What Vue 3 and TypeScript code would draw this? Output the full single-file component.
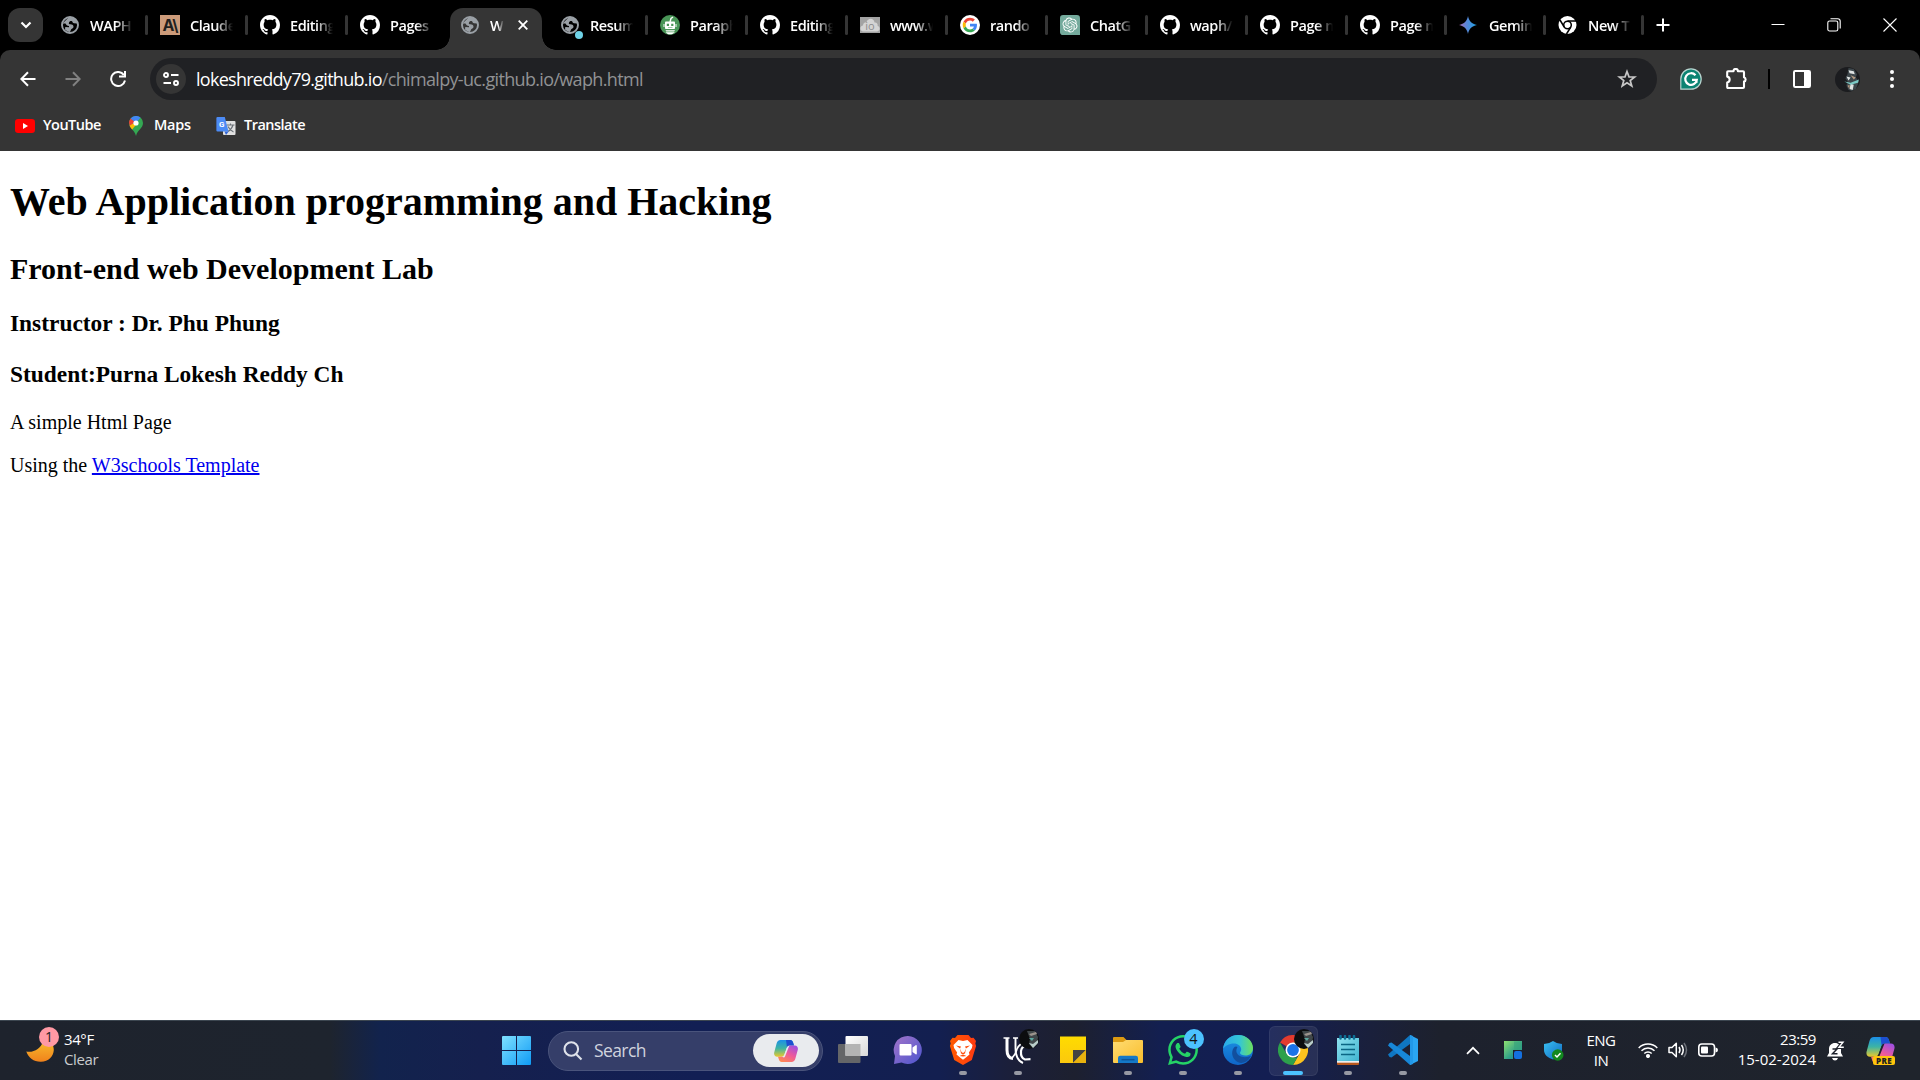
<script setup lang="ts">
interface Tab {
  icon: string
  title: string
  width: number
  active?: boolean
  noSep?: boolean
}

const tabs: Tab[] = [
  { icon: 'globe', title: 'WAPH', width: 100 },
  { icon: 'claude', title: 'Claude', width: 100 },
  { icon: 'github', title: 'Editing', width: 100 },
  { icon: 'github', title: 'Pages', width: 100, noSep: true },
  { icon: 'globe', title: 'W', width: 100, active: true, noSep: true },
  { icon: 'globe-dot', title: 'Resum', width: 100 },
  { icon: 'bot', title: 'Paraph', width: 100 },
  { icon: 'github', title: 'Editing', width: 100 },
  { icon: 'io', title: 'www.w', width: 100 },
  { icon: 'google', title: 'rando', width: 100 },
  { icon: 'openai', title: 'ChatG', width: 100 },
  { icon: 'github', title: 'waph/', width: 100 },
  { icon: 'github', title: 'Page n', width: 100 },
  { icon: 'github', title: 'Page n', width: 99 },
  { icon: 'gemini', title: 'Gemin', width: 99 },
  { icon: 'chrome', title: 'New T', width: 98 },
]

const apps: { name: string; running: boolean; active?: boolean }[] = [
  { name: 'taskview', running: false },
  { name: 'chat', running: false },
  { name: 'brave', running: true },
  { name: 'uc', running: true },
  { name: 'sticky', running: false },
  { name: 'folder', running: true },
  { name: 'whatsapp', running: true },
  { name: 'edge', running: true },
  { name: 'chrome', running: true, active: true },
  { name: 'notepad', running: true },
  { name: 'vscode', running: true },
]
</script>

<template>
  <div class="screen">
    <svg class="defs" width="0" height="0">
      <defs>
        <linearGradient id="gem" x1="0" x2="1"><stop offset="0" stop-color="#a96bb0" /><stop offset=".4" stop-color="#5b86d8" /><stop offset="1" stop-color="#1ba1e3" /></linearGradient>
        <linearGradient id="win" x1="0" y1="0" x2="1" y2="1"><stop offset="0" stop-color="#7fe0ff" /><stop offset="1" stop-color="#0f9bf5" /></linearGradient>
        <linearGradient id="moon" x1="0" y1="0" x2="0" y2="1"><stop offset="0" stop-color="#f9c22e" /><stop offset="1" stop-color="#f0821c" /></linearGradient>
        <linearGradient id="cpA" x1="0" y1="0" x2="0" y2="1"><stop offset="0" stop-color="#1b8fe8" /><stop offset=".5" stop-color="#3db4a4" /><stop offset="1" stop-color="#e9c92c" /></linearGradient>
        <linearGradient id="cpB" x1=".8" y1="0" x2=".2" y2="1"><stop offset="0" stop-color="#a04fe0" /><stop offset=".5" stop-color="#ee5a9a" /><stop offset="1" stop-color="#ff8a50" /></linearGradient>
        <linearGradient id="chat" x1="0" y1="0" x2="1" y2="1"><stop offset="0" stop-color="#a274c8" /><stop offset="1" stop-color="#4d55cf" /></linearGradient>
        <linearGradient id="tvA" x1="0" y1="0" x2="1" y2="1"><stop offset="0" stop-color="#fff" /><stop offset="1" stop-color="#d8d8d8" /></linearGradient>
        <linearGradient id="brave" x1="0" x2="1"><stop offset="0" stop-color="#ff5a00" /><stop offset="1" stop-color="#ff3a12" /></linearGradient>
        <linearGradient id="sticky" x1="0" y1="0" x2="0" y2="1"><stop offset="0" stop-color="#ffdc00" /><stop offset="1" stop-color="#fbc80e" /></linearGradient>
        <linearGradient id="folder" x1="0" y1="0" x2="1" y2="1"><stop offset="0" stop-color="#ffdc72" /><stop offset="1" stop-color="#f9bd2c" /></linearGradient>
        <linearGradient id="edgeA" x1="0" y1="0" x2="1" y2="0"><stop offset="0" stop-color="#2aa9e8" /><stop offset=".55" stop-color="#34c6d6" /><stop offset="1" stop-color="#6de05c" /></linearGradient>
        <linearGradient id="edgeB" x1="0" y1="0" x2="0" y2="1"><stop offset="0" stop-color="#1c94e4" /><stop offset="1" stop-color="#0f66c9" /></linearGradient>
        <linearGradient id="note" x1="0" y1="0" x2="1" y2="1"><stop offset="0" stop-color="#8ee2ef" /><stop offset="1" stop-color="#3fb4d0" /></linearGradient>
        <linearGradient id="tray" x1="0" y1="0" x2="1" y2="1"><stop offset="0" stop-color="#8fe070" /><stop offset=".6" stop-color="#2fa088" /><stop offset="1" stop-color="#1f7fae" /></linearGradient>
        <linearGradient id="shield" x1="0" y1="0" x2="1" y2="1"><stop offset="0" stop-color="#39c0f2" /><stop offset="1" stop-color="#1069c0" /></linearGradient>
        <symbol id="avatar" viewBox="0 0 24 24">
          <circle cx="12" cy="12" r="12" fill="#1b1c1f" />
          <path d="M13 1l5 1 3 5-1 3 3 4-3 7-4 2-3-1-2-4 1-4-2-3 2-4z" fill="#3d464b" />
          <path d="M13 3l5 1 1 3-5-1zM11 9l4 1-2 3zM15 16l3 1-1 5-3-1z" fill="#dfe3e2" />
          <path d="M9 14l6 1 8-3-1 3-7 2z" fill="#7bcac5" />
          <path d="M15 8l5 2-2 2zM12 18l2-1 0 4z" fill="#b59a81" />
        </symbol>
        <symbol id="face" viewBox="0 0 20 20">
          <circle cx="10" cy="10" r="10" fill="#0c0d0f" />
          <path d="M8 2l8 0 3 6-1 7-4 4-4-4 1-5z" fill="#40474a" />
          <path d="M10 5l7-2 1 2-6 2z" fill="#9c948d" />
          <path d="M10 14l4 1 5-4 0 3-5 5z" fill="#b9cdca" />
          <path d="M10 9l5 0-2 3z" fill="#5ba7a0" />
        </symbol>
        <symbol id="copilot" viewBox="0 0 24 22">
          <path d="M6.500 0h9.800c1.500 0 2.300 1 2.800 2.400l.9 3.100h-4c-1.800 0-2.700 1-3.200 2.600l-2.300 6.500C9.900 16 9 16.700 7.600 16.700H3.200C.8 16.700-.3 14.800.2 12.400L2.600 3.500C3.200 1.300 4.400 0 6.500 0z" fill="url(#cpA)" />
          <path d="M12 0h4.300c1.500 0 2.300 1 2.800 2.400l.9 3.100h-4c-1.800 0-2.500.8-3 2.100z" fill="#1d4fd0" />
          <path d="M17.500 22H7.700c-1.500 0-2.300-1-2.800-2.400L4 16.700h4c1.800 0 2.700-1 3.200-2.800l2.300-6.300c.5-1.400 1.400-2.100 2.800-2.100h4.500c2.400 0 3.500 1.900 3 4.300l-2.400 8.700C20.800 20.700 19.600 22 17.500 22z" fill="url(#cpB)" />
          <path d="M12.800 7.800q.7-2 2.600-2.300L11 16.500q-.8 1.700-2.700.2 1.500-.5 2-2z" fill="#e9ebee" />
        </symbol>
        <symbol id="copilot-dark" viewBox="0 0 24 22">
          <path d="M6.500 0h9.800c1.500 0 2.300 1 2.800 2.400l.9 3.100h-4c-1.800 0-2.700 1-3.200 2.600l-2.300 6.500C9.900 16 9 16.700 7.600 16.700H3.200C.8 16.700-.3 14.800.2 12.400L2.600 3.500C3.200 1.300 4.400 0 6.500 0z" fill="url(#cpA)" />
          <path d="M12 0h4.300c1.500 0 2.300 1 2.800 2.400l.9 3.100h-4c-1.800 0-2.500.8-3 2.100z" fill="#1d4fd0" />
          <path d="M17.500 22H7.700c-1.500 0-2.300-1-2.800-2.400L4 16.700h4c1.800 0 2.700-1 3.200-2.800l2.300-6.300c.5-1.400 1.400-2.100 2.800-2.100h4.500c2.400 0 3.500 1.900 3 4.300l-2.400 8.700C20.800 20.700 19.600 22 17.500 22z" fill="url(#cpB)" />
          <path d="M12.800 7.800q.7-2 2.600-2.300L11 16.500q-.8 1.700-2.700.2 1.500-.5 2-2z" fill="#1f232d" />
        </symbol>
      </defs>
    </svg>

    <header class="tabstrip">
      <button class="tab-search">
        <svg width="12" height="12" viewBox="0 0 12 12"><path d="M1.500 3.500L6 8l4.500-4.500" fill="none" stroke="#fff" stroke-width="2.200" /></svg>
      </button>
      <div class="tabs">
        <div v-for="(tab, i) in tabs" :key="i" class="tab" :class="{ active: tab.active, nosep: tab.noSep }" :style="{ width: tab.width + 'px' }">
          <span class="favicon">
            <svg v-if="tab.icon.startsWith('globe')" width="20" height="20" viewBox="0 0 20 20">
              <circle cx="10" cy="10" r="8" fill="none" stroke="#9aa0a6" stroke-width="1.900" />
              <path d="M2.500 8.500L9 2l5 1c2 1 3.500 3.500 3.500 5.500l-3.500-.3c-2-.2-1-2-2.500-2.200-1.700 0-2 .5-2.500 1.500-.4 1-.1 1.500.7 1.700 2 .2 3.800.2 3.800 2.600 0 1.200-.7 1.700-2 2.200-.8.6-.6 1.700-1.500 2.900l-2.500-.4-2.500-2 .3-2.500 3.700.2V11c-2 0-2.700-1.300-3.500-2.500z" fill="#9aa0a6" />
            </svg>
            <span v-else-if="tab.icon === 'claude'" class="claude">A\</span>
            <svg v-else-if="tab.icon === 'github'" width="20" height="20" viewBox="0 0 16 16"><path fill="#fff" d="M8 0C3.580 0 0 3.580 0 8c0 3.540 2.290 6.530 5.470 7.590.4.070.55-.17.55-.38 0-.19-.01-.82-.01-1.490-2.010.37-2.530-.49-2.690-.94-.09-.23-.48-.94-.82-1.130-.28-.15-.68-.52-.01-.53.63-.01 1.080.58 1.230.82.72 1.210 1.870.87 2.330.66.07-.52.28-.87.51-1.070-1.780-.2-3.640-.89-3.640-3.950 0-.87.31-1.590.82-2.150-.08-.2-.36-1.020.08-2.120 0 0 .67-.21 2.200.82.64-.18 1.320-.27 2-.27.68 0 1.360.09 2 .27 1.530-1.040 2.200-.82 2.200-.82.44 1.100.16 1.920.08 2.120.51.56.82 1.270.82 2.150 0 3.070-1.870 3.750-3.650 3.950.29.25.54.73.54 1.480 0 1.070-.01 1.930-.01 2.200 0 .21.15.46.55.38A8.013 8.013 0 0016 8c0-4.420-3.580-8-8-8z" /></svg>
            <svg v-else-if="tab.icon === 'bot'" width="20" height="20" viewBox="0 0 20 20">
              <circle cx="10" cy="10" r="10" fill="#499557" />
              <path d="M10 7l1-3.500 2-1.500" fill="none" stroke="#fff" stroke-width="1.400" />
              <rect x="5" y="6.500" width="10" height="7.500" rx=".8" fill="#fff" /><path d="M4 9v3M16 9v3" stroke="#fff" />
              <path d="M6.800 8.800h2.200v2.200H6.800zM11.200 8.800h2.200v2.200h-2.200zM8 12.400h4.500v.7H8z" fill="#499557" />
              <path d="M5.500 15.200h9.500l-.8 1.400H6.300zM5.500 17.300h9.500l-3 2h-4z" fill="#fff" />
            </svg>
            <span v-else-if="tab.icon === 'io'" class="io">
              <svg width="20" height="16" viewBox="0 0 20 16"><path d="M3 14.500c-4-1-3-6 0-6 0-3 3-3.500 3.500-3 1-5 7.500-5 8 0 3-.5 3.500 2.500 3 3.500 3 .5 3 5-.5 5.500z" fill="#d4d4d4" /></svg>
              <b>io</b>
            </span>
            <svg v-else-if="tab.icon === 'google'" width="20" height="20" viewBox="-9 -9 66 66">
              <circle cx="24" cy="24" r="33" fill="#fff" />
              <path fill="#EA4335" d="M24 9.500c3.540 0 6.710 1.220 9.210 3.600l6.850-6.850C35.900 2.380 30.470 0 24 0 14.620 0 6.510 5.380 2.560 13.220l7.980 6.190C12.430 13.720 17.740 9.500 24 9.500z" />
              <path fill="#4285F4" d="M46.980 24.550c0-1.570-.15-3.090-.38-4.550H24v9.020h12.940c-.58 2.960-2.260 5.480-4.780 7.180l7.730 6c4.510-4.180 7.090-10.360 7.090-17.650z" />
              <path fill="#FBBC05" d="M10.530 28.590c-.48-1.450-.76-2.990-.76-4.590s.27-3.140.76-4.590l-7.980-6.190C.92 16.460 0 20.120 0 24c0 3.880.92 7.540 2.560 10.780l7.970-6.190z" />
              <path fill="#34A853" d="M24 48c6.480 0 11.930-2.130 15.890-5.810l-7.730-6c-2.150 1.450-4.920 2.300-8.160 2.300-6.260 0-11.570-4.220-13.470-9.910l-7.980 6.190C6.510 42.620 14.620 48 24 48z" />
            </svg>
            <svg v-else-if="tab.icon === 'openai'" width="20" height="20" viewBox="-4 -4 32 32">
              <rect x="-4" y="-4" width="32" height="32" rx="5" fill="#74aa9c" /><path d="M18 20h10v8H18z" fill="#74aa9c" />
              <path fill="#fff" d="M22.282 9.821a5.985 5.985 0 0 0-.516-4.911 6.046 6.046 0 0 0-6.510-2.900A6.065 6.065 0 0 0 4.981 4.182a5.985 5.985 0 0 0-3.998 2.900 6.046 6.046 0 0 0 .743 7.097 5.980 5.980 0 0 0 .511 4.911 6.051 6.051 0 0 0 6.515 2.900A5.985 5.985 0 0 0 13.260 24a6.056 6.056 0 0 0 5.772-4.206 5.989 5.989 0 0 0 3.998-2.900 6.056 6.056 0 0 0-.748-7.073zm-9.022 12.608a4.476 4.476 0 0 1-2.876-1.041l.142-.080 4.778-2.758a.795.795 0 0 0 .393-.681v-6.737l2.020 1.169a.071.071 0 0 1 .038.052v5.583a4.504 4.504 0 0 1-4.495 4.493zm-9.661-4.125a4.471 4.471 0 0 1-.535-3.014l.142.085 4.783 2.758a.771.771 0 0 0 .781 0l5.843-3.369v2.332a.080.080 0 0 1-.033.062L9.740 19.950a4.499 4.499 0 0 1-6.141-1.646zM2.341 7.896a4.485 4.485 0 0 1 2.366-1.973V11.600a.766.766 0 0 0 .388.677l5.814 3.354-2.020 1.169a.076.076 0 0 1-.071 0l-4.830-2.787A4.504 4.504 0 0 1 2.341 7.872zm16.596 3.856L13.104 8.364 15.119 7.200a.076.076 0 0 1 .071 0l4.830 2.791a4.494 4.494 0 0 1-.677 8.104v-5.677a.790.790 0 0 0-.406-.666zm2.011-3.023l-.142-.085-4.774-2.782a.776.776 0 0 0-.785 0L9.409 9.230V6.897a.066.066 0 0 1 .028-.062l4.830-2.787a4.499 4.499 0 0 1 6.681 4.681zM8.307 12.863l-2.020-1.164a.080.080 0 0 1-.038-.057V6.074a4.499 4.499 0 0 1 7.376-3.454l-.142.081L8.704 5.459a.795.795 0 0 0-.393.681zm1.097-2.365l2.602-1.500 2.607 1.500v2.999l-2.597 1.500-2.607-1.500Z" />
            </svg>
            <svg v-else-if="tab.icon === 'gemini'" width="20" height="20" viewBox="0 0 20 20"><path d="M9 1c.9 5 3.700 7.900 9 9-5.300 1-8.100 4-9 9-.9-5-3.700-8-9-9 5.300-1.100 8.100-4 9-9z" fill="url(#gem)" /></svg>
            <svg v-else width="20" height="20" viewBox="0 0 20 20">
              <circle cx="9.500" cy="10" r="9" fill="#fff" />
              <circle cx="9.500" cy="10" r="3.800" fill="none" stroke="#000" stroke-width="1.500" />
              <path d="M9.500 6.100H18M6.200 12L2 5M12.800 12l-4.300 7" stroke="#000" stroke-width="1.500" />
            </svg>
            <i v-if="tab.icon === 'globe-dot'" class="notice"></i>
          </span>
          <span class="title">{{ tab.title }}</span>
          <svg v-if="tab.active" class="close" width="10" height="10" viewBox="0 0 10 10"><path d="M.7.7l8.600 8.600M9.300.7L.7 9.300" stroke="#fff" stroke-width="1.800" /></svg>
        </div>
      </div>
      <svg class="plus" width="14" height="14" viewBox="0 0 14 14"><path d="M7 .5v13M.5 7h13" stroke="#fff" stroke-width="2" /></svg>
      <div class="winbtns">
        <svg width="14" height="14" viewBox="0 0 14 14"><path d="M.5 6.500h13" stroke="#fff" /></svg>
        <svg width="14" height="14" viewBox="0 0 14 14" fill="none" stroke="#fff" stroke-width="1.100"><rect x=".8" y="3" width="10" height="10" rx="1.800" /><path d="M3.500.8h7.200q2.500 0 2.500 2.500v7.200" /></svg>
        <svg width="14" height="14" viewBox="0 0 14 14"><path d="M.5.500l13 13M13.500.500l-13 13" stroke="#fff" stroke-width="1.100" /></svg>
      </div>
    </header>

    <div class="chrome">
      <div class="toolbar">
        <svg class="nav" width="16" height="16" viewBox="0 0 16 16" fill="none" stroke="#fff" stroke-width="2"><path d="M15.500 8H1.800M8 1.200L1.300 8 8 14.800" /></svg>
        <svg class="nav" width="16" height="16" viewBox="0 0 16 16" fill="none" stroke="#818181" stroke-width="2"><path d="M.5 8h13.700M8 1.200L14.700 8 8 14.800" /></svg>
        <svg class="nav" width="16" height="16" viewBox="0 0 16 16" fill="none" stroke="#fff" stroke-width="2"><path d="M13.800 3.800A7 7 0 1 0 15 9.500M15 0v5.500H9" /></svg>
        <div class="omnibox">
          <span class="site">
            <svg width="16" height="14" viewBox="0 0 16 14" fill="none" stroke="#fff" stroke-width="1.900"><circle cx="3" cy="3" r="2" /><path d="M8 3h7.500M.5 11H8" /><circle cx="13" cy="11" r="2" /></svg>
          </span>
          <span class="url"><span class="host">lokeshreddy79.github.io</span><span class="path">/chimalpy-uc.github.io/waph.html</span></span>
          <svg class="star" width="20" height="20" viewBox="0 0 20 20"><path d="M10 2.500l2 5.300 5.700.2-4.500 3.500 1.600 5.500-4.800-3.200L5.200 17l1.600-5.500L2.300 8l5.700-.2z" fill="none" stroke="#c7c7c7" stroke-width="1.700" /></svg>
        </div>
        <svg class="gram" width="22" height="22" viewBox="0 0 22 22">
          <path d="M.8 21.200V11A10.200 10.200 0 1 1 11 21.200z" fill="#0b8372" stroke="#b9d6d1" stroke-width="1.200" />
          <path d="M15.500 7.300A5.800 5.800 0 1 0 16.800 11.800H12M16.500 11v3.800" fill="none" stroke="#fff" stroke-width="2.200" />
        </svg>
        <svg class="ext" width="22" height="22" viewBox="0 0 22 22"><path d="M2 3.200h5.500a2.200 2.200 0 0 1 4.400 0H17q1 0 1 1v5a2.300 2.300 0 0 1 0 4.400V19q0 1-1 1H2q-.8 0-.8-1v-4.500a3 3 0 0 0 0-5.900V4q0-.8.8-.8z" fill="none" stroke="#fff" stroke-width="2.100" stroke-linejoin="round" /></svg>
        <i class="divider"></i>
        <svg class="panel" width="18" height="18" viewBox="0 0 18 18"><rect x="1" y="1" width="16" height="16" rx="1.200" fill="none" stroke="#fff" stroke-width="2" /><path d="M11 1h6v16h-6z" fill="#fff" /></svg>
        <svg class="me" width="25" height="25"><use href="#avatar" /></svg>
        <svg class="dots" width="4" height="18" viewBox="0 0 4 18" fill="#fff"><circle cx="2" cy="2" r="2" /><circle cx="2" cy="9" r="2" /><circle cx="2" cy="16" r="2" /></svg>
      </div>
      <div class="bookmarks">
        <a class="bm yt"><svg width="20" height="14" viewBox="0 0 20 14"><rect width="20" height="14" rx="3.200" fill="#f00" /><path d="M8 4l5 3-5 3z" fill="#fff" /></svg><span>YouTube</span></a>
        <a class="bm maps">
          <svg width="14" height="20" viewBox="0 0 14 20">
            <path d="M7 0a7 7 0 0 0-7 7c0 5.500 5.500 6.500 7 13 1.500-6.500 7-7.500 7-13a7 7 0 0 0-7-7z" fill="#34a853" />
            <path d="M11.500 1.600L5 9.500 1.600 2.500a7 7 0 0 1 9.900-.9z" fill="#4285f4" /><path d="M1.600 2.500L5.500 5.700 1.200 11 0 7q0-2.500 1.600-4.500z" fill="#ea4335" /><path d="M4 7.500L.6 9.800q1 2 2.600 3.700l3.800-4.800z" fill="#fbbc04" />
            <circle cx="7" cy="7" r="2.600" fill="#fff" />
          </svg><span>Maps</span></a>
        <a class="bm tr">
          <span class="trico">
            <svg width="20" height="20" viewBox="0 0 20 20"><rect x="7" y="5" width="12.500" height="14" rx="1" fill="#e0e0e0" /><path d="M10.500 9h8M14.500 7.500V9M17 9q-1 4-5 6.500M12 10.500q2 4 5.500 5.500" fill="none" stroke="#6b7177" stroke-width="1.100" /><path d="M1.500 1h7.300l3.700 14.500H1.500Q.4 15.500.4 14.500V2Q.4 1 1.500 1z" fill="#4c8bf5" /><path d="M8.500 15.500h4.200L10 19z" fill="#3367d6" /></svg>
            <b>G</b>
          </span><span>Translate</span></a>
      </div>
    </div>

    <main class="page">
      <h1>Web Application programming and Hacking</h1>
      <h2>Front-end web Development Lab</h2>
      <h3>Instructor : Dr. Phu Phung</h3>
      <h3>Student:Purna Lokesh Reddy Ch</h3>
      <p>A simple Html Page</p>
      <p>Using the <a href="#">W3schools Template</a></p>
    </main>

    <footer class="taskbar">
      <div class="weather">
        <div class="moon">
          <svg width="28" height="28" viewBox="0 0 28 28"><path d="M.3 17.500C7 19 15 15 17 7.500l1-3c6.500 1.500 10 6.500 9.800 11.500C27.500 22.500 22.500 27.500 15 27.800 8 28 2.500 24 .3 17.500z" fill="url(#moon)" /></svg>
          <span class="count">1</span>
        </div>
        <div class="wtext"><span>34°F</span><span class="cond">Clear</span></div>
      </div>

      <svg class="start" width="29" height="29" viewBox="0 0 29 29" fill="url(#win)"><path d="M1 0h13v14H0V1q0-1 1-1zM15 0h13q1 0 1 1v13H15zM0 15h14v14H1q-1 0-1-1zM15 15h14v13q0 1-1 1H15z" /></svg>

      <div class="search">
        <svg width="20" height="20" viewBox="0 0 20 20" fill="none" stroke="#dfe2ea" stroke-width="2.100"><circle cx="8.300" cy="8" r="6.800" /><path d="M13 13l5.500 5.500" /></svg>
        <span class="label">Search</span>
        <span class="pill"><svg width="24" height="22"><use href="#copilot" /></svg></span>
      </div>

      <div class="apps">
        <div v-for="app in apps" :key="app.name" class="app" :class="{ current: app.active }">
          <svg v-if="app.name === 'taskview'" width="30" height="30" viewBox="0 0 30 30"><rect x="0" y="9" width="22.500" height="19" rx="1" fill="#656668" /><rect x="7.500" y="1" width="22.500" height="20" rx="1" fill="url(#tvA)" /><path d="M7.500 9h15v12h-15z" fill="#b4b4b4" /></svg>
          <svg v-else-if="app.name === 'chat'" width="30" height="30" viewBox="0 0 30 30"><path d="M15 1a14 14 0 1 1-6.500 26.500L1 29l1-8A14 14 0 0 1 15 1z" fill="url(#chat)" /><rect x="6.500" y="9" width="12" height="11.500" rx="1" fill="#fff" /><path d="M19.500 12.500l3.500-2.500q.8 0 .8 1v7.500q0 1-.8 1l-3.500-2.500z" fill="#fff" /></svg>
          <svg v-else-if="app.name === 'brave'" width="30" height="30" viewBox="0 0 30 30">
            <path d="M9.500 0h11l2.500 3 2.500-.3L28 6l-.7 2.500.8 2.500-4.300 14L15 30l-8.800-5L1.900 11l.8-2.500L2 6l2.500-3.300L7 3z" fill="url(#brave)" />
            <path d="M15 6l4.500-1 5 5-.6 3-3 4.500.6 2-4.500 3.800-2 1.400-2-1.400-4.500-3.800.6-2-3-4.500-.6-3 5-5z" fill="#fff" />
            <path d="M8 10.500l5 1-1 2zM22 10.500l-5 1 1 2zM12 13.500l1.500 3.500 1.500 1 1.500-1 1.500-3.500-1 5-2 .8-2-.8zM11.500 21l3.500-1.600 3.500 1.600-3.500.6z" fill="#ff4d0b" />
          </svg>
          <svg v-else-if="app.name === 'uc'" width="30" height="30" viewBox="0 0 30 30" fill="none" stroke="#fff"><path d="M.5 3h6M10 3h5" stroke-width="1.400" /><path d="M4 3v12q0 8 6 8.500" stroke-width="3" /><path d="M12.500 3v10q0 12 7.500 15" stroke-width="1.900" /><path d="M24 8q-7-1-10 6-2 7-6 9.500" stroke-width="1.600" /><path d="M25 11q-6-1-7 5-.5 7 4 8.500l5.500-.3" stroke-width="2.200" /></svg>
          <svg v-else-if="app.name === 'sticky'" width="30" height="30" viewBox="0 0 30 30"><path d="M2 1.500h26V18L16.500 28H2z" fill="url(#sticky)" /><path d="M15 15h13L15 28z" fill="#454342" /><path d="M28 15v13H15z" fill="#e8b20e" /></svg>
          <svg v-else-if="app.name === 'folder'" width="30" height="30" viewBox="0 0 30 30"><path d="M1 2h9.500l3 3H28q1 0 1 1v6H0V3q0-1 1-1z" fill="#dc9a12" /><path d="M0 7h10l3-2h16q1 0 1 1v21q0 1-1 1H1q-1 0-1-1z" fill="url(#folder)" /><path d="M5 28v-5q0-2.300 2.300-2.300h15.400Q25 20.700 25 23v5z" fill="#1478c8" /><path d="M8.500 24.700h13" stroke="#0c559a" stroke-width="1.500" /></svg>
          <svg v-else-if="app.name === 'whatsapp'" width="30" height="30" viewBox="0 0 24 24"><path fill="#25d366" d="M17.472 14.382c-.297-.149-1.758-.867-2.030-.967-.273-.099-.471-.148-.670.150-.197.297-.767.966-.940 1.164-.173.199-.347.223-.644.075-.297-.150-1.255-.463-2.390-1.475-.883-.788-1.480-1.761-1.653-2.059-.173-.297-.018-.458.130-.606.134-.133.298-.347.446-.520.149-.174.198-.298.298-.497.099-.198.050-.371-.025-.520-.075-.149-.669-1.612-.916-2.207-.242-.579-.487-.500-.669-.510-.173-.008-.371-.010-.570-.010-.198 0-.520.074-.792.372-.272.297-1.040 1.016-1.040 2.479 0 1.462 1.065 2.875 1.213 3.074.149.198 2.096 3.200 5.077 4.487.709.306 1.262.489 1.694.625.712.227 1.360.195 1.871.118.571-.085 1.758-.719 2.006-1.413.248-.694.248-1.289.173-1.413-.074-.124-.272-.198-.570-.347m-5.421 7.403h-.004a9.870 9.870 0 01-5.031-1.378l-.361-.214-3.741.982.998-3.648-.235-.374a9.860 9.860 0 01-1.510-5.260c.001-5.450 4.436-9.884 9.888-9.884 2.640 0 5.122 1.030 6.988 2.898a9.825 9.825 0 012.893 6.994c-.003 5.450-4.437 9.884-9.885 9.884m8.413-18.297A11.815 11.815 0 0012.050 0C5.495 0 .160 5.335.157 11.892c0 2.096.547 4.142 1.588 5.945L.057 24l6.305-1.654a11.882 11.882 0 005.683 1.448h.005c6.554 0 11.890-5.335 11.893-11.893a11.821 11.821 0 00-3.480-8.413Z" /></svg>
          <svg v-else-if="app.name === 'edge'" width="30" height="30" viewBox="0 0 30 30">
            <circle cx="15" cy="15" r="15" fill="url(#edgeB)" />
            <path d="M0 14C1 5.500 7 0 15 0c9 0 15 6.500 15 13 0 5-3.500 7.500-7.500 7.500-3 0-5.500-1-5.500-2.500 0-1 1.200-1.500 1.200-3.700C18 11 15 8.500 11 8.500 6 8.500 1.500 11 0 14z" fill="url(#edgeA)" />
            <path d="M11.500 12c-3 3-3.500 9 1 13.500 4 3.800 10.500 3.500 15-3.500l.5-1.500c-3 2-8.500 2.500-12 0-2.800-2-3.500-5.500-1.500-8.500q-1.500-.8-3 0z" fill="#124f9e" />
            <path d="M17 18c0 1.500 2.500 2.500 5.500 2.500 4 0 7.500-2.500 7.500-7.500v9h-2q-6 2-10 0-3-1.500-1-4z" fill="#16224f" opacity="0" />
          </svg>
          <svg v-else-if="app.name === 'chrome'" width="30" height="30" viewBox="0 0 30 30">
            <path d="M15 15L2 7.500A15 15 0 0 1 28 7.500H15z" fill="#e33b2e" />
            <path d="M15 7.500h13A15 15 0 0 1 15 30l6.500-11.200z" fill="#fcc31e" />
            <path d="M2 7.500l6.500 11.300L15 22.500h4.300L15 30A15 15 0 0 1 2 7.500z" fill="#2da14c" />
            <circle cx="15" cy="15" r="7.500" fill="#fff" /><circle cx="15" cy="15" r="5.900" fill="#1a73e8" />
          </svg>
          <svg v-else-if="app.name === 'notepad'" width="30" height="30" viewBox="0 0 30 30"><path d="M4 26h22v3q0 1-1 1H5q-1 0-1-1z" fill="#b8581e" /><path d="M4 3h22v23.500H4z" fill="url(#note)" /><path d="M4 26h22v1.700H4z" fill="#eee" /><path d="M7.500 1v2.500M12 1v2.500M16.500 1v2.500M21 1v2.500" stroke="#0c6f95" stroke-width="2.500" stroke-linecap="round" /><path d="M8 9.500h14M8 14.500h14M8 19.500h14" stroke="#0b6683" stroke-width="1.600" /></svg>
          <svg v-else width="30" height="30" viewBox="0 0 30 30"><path d="M22 0L30 4v22l-8 4z" fill="#2aa5f2" /><path d="M22 0v9L3.500 22.500 1.500 22 0 19.500z" fill="#0f76c2" /><path d="M22 30v-9L3.500 7.500l-2 .5L0 10.500z" fill="#1787d8" /><path d="M22 0l3 1v28l-3 1z" fill="#2298e8" /></svg>
          <svg v-if="app.name === 'uc' || app.name === 'chrome'" class="badge" width="20" height="20"><use href="#face" /></svg>
          <span v-if="app.name === 'whatsapp'" class="badge num">4</span>
          <i v-if="app.running" class="run"></i>
        </div>
      </div>

      <div class="tray">
        <svg class="t-up" width="14" height="9" viewBox="0 0 14 9"><path d="M1 7.800l6-6 6 6" fill="none" stroke="#fff" stroke-width="1.700" /></svg>
        <svg class="t-grid" width="18" height="18" viewBox="0 0 18 18"><path d="M0 0h18v9H9v9H0z" fill="url(#tray)" /><path d="M10 .5h7.500V9H10z" fill="#3aa57c" opacity=".7" /><rect x="10" y="10" width="8" height="8" rx="2" fill="#1470e0" /></svg>
        <svg class="t-shield" width="20" height="20" viewBox="0 0 20 20"><path d="M9 0q4 3 9 3v6c0 5-4 7.500-9 9.500C4 16.500 0 14 0 9V3q5 0 9-3z" fill="url(#shield)" /><circle cx="13.700" cy="14" r="5.800" fill="#12881f" /><path d="M11 14l2 2 3.500-3.800" fill="none" stroke="#fff" stroke-width="1.500" /></svg>
        <div class="lang"><span>ENG</span><span>IN</span></div>
        <svg class="t-wifi" width="20" height="16" viewBox="0 0 20 16" fill="none" stroke="#fff" stroke-width="1.500"><path d="M.7 6a13 13 0 0 1 18.600 0M3.500 8.800a9 9 0 0 1 13 0M6.300 11.500a5.200 5.200 0 0 1 7.400 0" /><circle cx="10" cy="14" r="1.300" fill="#fff" /></svg>
        <svg class="t-vol" width="20" height="18" viewBox="0 0 20 18" fill="none" stroke="#fff" stroke-width="1.500"><path d="M1 6.500h3L8.300 2.300v13.400L4 11.500H1z" stroke-linejoin="round" /><path d="M11 6q2 3 0 6M13.500 4q3.500 5 0 10" /><path d="M16 2q5 7 0 14" stroke="#6d7179" /></svg>
        <svg class="t-bat" width="20" height="14" viewBox="0 0 20 14"><rect x=".8" y="1" width="15.700" height="12" rx="3" fill="none" stroke="#fff" stroke-width="1.600" /><rect x="3" y="3.500" width="7" height="7" rx="1" fill="#fff" /><path d="M17.500 4.500q2.500.3 2.500 2.500t-2.500 2.500z" fill="#fff" /></svg>
        <div class="clock"><span>23:59</span><span class="date">15-02-2024</span></div>
        <svg class="t-bell" width="18" height="20" viewBox="0 0 18 20"><path d="M8 2c3.500 0 6 2.500 6 6v4l2 3.500H0L2 12V8c0-3.500 2.500-6 6-6zM5 17h6q-.8 2.500-3 2.500T5 17z" fill="#fff" /><path d="M11.500 1.200H16l-4 5h4.800" fill="none" stroke="#1f232d" stroke-width="3.600" /><path d="M11.500 1.200H16l-4 5h4.800" fill="none" stroke="#fff" stroke-width="1.400" /><path d="M5.500 8h4.500l-4.500 4.800h5" fill="none" stroke="#1f232d" stroke-width="1.500" /></svg>
        <div class="pre"><svg width="29" height="26"><use href="#copilot-dark" /></svg><b>PRE</b></div>
      </div>
    </footer>
  </div>
</template>

<style>
html, body { margin: 0; overflow: hidden; background: #fff; }
</style>

<style scoped>
.screen { width: 1920px; height: 1080px; display: flex; flex-direction: column; background: linear-gradient(#000 0 100px, #fff 100px); overflow: hidden; font-family: "Open Sans", "Noto Sans", sans-serif; }
.defs { position: absolute; }
svg { display: block; flex: none; }

.tabstrip { height: 50px; flex: none; background: #000; display: flex; align-items: center; }
.tab-search { width: 35px; height: 34px; margin-left: 8px; border: 0; padding: 0; border-radius: 12px; background: #353535; display: flex; align-items: center; justify-content: center; }
.tabs { display: flex; margin-left: 3px; height: 50px; }
.tab { position: relative; display: flex; align-items: center; flex: none; padding-left: 14px; box-sizing: border-box; }
.tab::after { content: ""; position: absolute; right: -2px; top: 15px; width: 3px; height: 20px; border-radius: 2px; background: #353535; }
.tab.nosep::after { display: none; }
.favicon { position: relative; z-index: 1; width: 20px; height: 20px; flex: none; display: flex; align-items: center; justify-content: center; }
.title { position: relative; z-index: 1; margin-left: 10px; width: 44px; overflow: hidden; white-space: nowrap; color: #fff; font-size: 14.500px; font-weight: 600; letter-spacing: -0.450px; line-height: 22px; margin-top: 1px; -webkit-mask-image: linear-gradient(90deg, #000 58%, transparent 98%); mask-image: linear-gradient(90deg, #000 58%, transparent 98%); }
.active .title { width: 14px; }
.close { position: relative; z-index: 1; margin-left: 14px; }
.active::before { content: ""; position: absolute; left: 4px; top: 8px; width: 92px; height: 42px; border-radius: 13px 13px 0 0; background: #353535; }
.tab.active::after { display: block; left: -10px; right: auto; top: 36px; width: 120px; height: 14px; border-radius: 0; background: radial-gradient(circle at 0 0, transparent 13.500px, #353535 14px) left / 14px 14px no-repeat, radial-gradient(circle at 100% 0, transparent 13.500px, #353535 14px) right / 14px 14px no-repeat; }
.notice { position: absolute; left: 15px; top: 16px; width: 8px; height: 8px; border-radius: 50%; background: #6fd3e8; }
.claude { width: 20px; height: 20px; background: #cc9b7a; color: #1f1f1e; font: 700 16px/20px "Inter", sans-serif; letter-spacing: -1px; text-align: center; }
.io { position: relative; width: 20px; height: 16px; background: #a3a3a3; }
.io b { position: absolute; left: 0; right: 0; top: 2px; text-align: center; font: 400 11px/14px "Open Sans", sans-serif; color: #8d8d8d; }
.plus { margin-left: 14px; }
.winbtns { display: flex; gap: 42px; margin-left: 101px; }

.chrome { height: 101px; flex: none; background: #353535; border-radius: 10px 10px 0 0; }
.toolbar { height: 58px; display: flex; align-items: center; padding-left: 20px; }
.nav { margin-right: 29px; }
.omnibox { width: 1507px; height: 42px; box-sizing: border-box; margin-left: -5px; border-radius: 21px; background: #202124; display: flex; align-items: center; padding: 0 20px 0 6px; }
.site { width: 30px; height: 30px; border-radius: 50%; background: #353535; display: flex; align-items: center; justify-content: center; }
.url { margin-left: 10px; font-size: 18px; line-height: 26px; color: #fff; white-space: nowrap; }
.host { letter-spacing: -0.720px; }
.path { color: #919294; letter-spacing: -0.660px; }
.star { margin-left: auto; }
.gram { margin-left: 23px; }
.ext { margin-left: 24px; }
.divider { width: 2px; height: 20px; background: #000; margin-left: 20px; }
.panel { margin-left: 23px; }
.me { margin-left: 24px; }
.dots { margin-left: 30px; }
.bookmarks { display: flex; align-items: center; height: 36px; padding: 0 15px; }
.bm { display: flex; align-items: center; color: #fff; font-size: 14.500px; font-weight: 600; letter-spacing: -0.520px; white-space: nowrap; line-height: 20px; }
.bm > span:last-child { margin-bottom: 2px; }
.yt { width: 114px; gap: 8px; }
.maps { width: 87px; gap: 11px; letter-spacing: -0.300px; }
.tr { gap: 8px; }
.trico { position: relative; }
.trico b { position: absolute; left: 3px; top: 4px; font: 700 8px/9px "Roboto", sans-serif; color: #fff; letter-spacing: 0; }

.page { flex: 1; overflow: hidden; background: #fff; color: #000; padding: 0 10px; font-family: "Liberation Serif", "Times New Roman", serif; font-size: 20px; }
.page h1 { font-size: 40px; margin: 27.800px 0 26.800px; line-height: 46px; }
.page h2 { font-size: 30px; margin: 0 0 24.900px; line-height: 34px; }
.page h3 { font-size: 23.400px; margin: 0 0 23.400px; line-height: 27px; }
.page p { margin: 0 0 20px; line-height: 23px; }
.page a { color: #0000ee; }

.taskbar { height: 60px; flex: none; box-sizing: border-box; border-top: 1px solid #3c4650; display: flex; align-items: center; color: #fff; background: linear-gradient(90deg, #1e232d 0, #1e242e 330px, #12234d 380px, #15204e 480px, #121f54 700px, #131f50 940px, #1b1f3a 1010px, #1d202f 1075px, #131f50 1160px, #131e52 1270px, #1a203c 1370px, #1d212d 1440px, #1f242c 1900px); }
.weather { display: flex; align-items: center; width: 502px; }
.moon { position: relative; margin-left: 26px; width: 28px; height: 28px; margin-top: -6px; }
.count { position: absolute; left: 13px; top: -7px; width: 20px; height: 20px; border-radius: 50%; background: #ff99a4; color: #222; font-size: 14px; line-height: 20px; text-align: center; }
.wtext { display: flex; flex-direction: column; margin-left: 10px; font-size: 15px; line-height: 20px; letter-spacing: -0.400px; margin-top: -4px; }
.cond { color: #c9cbce; letter-spacing: -0.400px; }
.search { width: 275px; height: 40px; box-sizing: border-box; margin-left: 17px; border: 1px solid #4a547c; border-radius: 20px; background: #353e69; display: flex; align-items: center; padding: 0 3px 0 14px; }
.search .label { margin-left: 11px; font-size: 17.500px; color: #d0d3de; letter-spacing: -0.600px; margin-top: -1px; }
.pill { margin-left: auto; width: 66px; height: 33px; border-radius: 17px; background: #e9ebee; display: flex; align-items: center; justify-content: center; }
.apps { display: flex; margin-left: 2.500px; }
.app { position: relative; width: 55px; height: 50px; display: flex; align-items: center; justify-content: center; }
.app.current::before { content: ""; position: absolute; inset: 0 3px; border-radius: 6px; background: rgba(255,255,255,.08); border: 1px solid rgba(255,255,255,.06); box-sizing: border-box; }
.app > svg { position: relative; margin-top: -1px; }
.app > .badge { position: absolute; left: 28px; top: 3px; margin: 0; }
.num { width: 20px; height: 20px; border-radius: 50%; background: #4cc2ff; color: #111; font-size: 14.500px; line-height: 20px; text-align: center; }
.run { position: absolute; left: 23.500px; bottom: 1px; width: 8px; height: 4px; border-radius: 2px; background: #9799a3; }
.current .run { left: 17.500px; width: 20px; background: #4cc2ff; }
.tray { display: flex; align-items: center; font-size: 15px; line-height: 20px; }
.t-up { margin-left: 35.500px; }
.t-grid { margin-left: 24px; margin-top: -1px; }
.t-shield { margin-left: 22px; }
.lang { display: flex; flex-direction: column; align-items: center; width: 40px; margin-left: 17px; letter-spacing: -0.500px; margin-top: -2px; }
.t-wifi { margin-left: 17px; margin-top: -2px; }
.t-vol { margin-left: 10px; margin-top: -1px; }
.t-bat { margin-left: 10px; margin-top: -1px; }
.clock { display: flex; flex-direction: column; align-items: flex-end; width: 98px; letter-spacing: -0.450px; margin-top: -4px; }
.date { letter-spacing: 0; }
.t-bell { margin-left: 11px; }
.pre { position: relative; margin-left: 21px; width: 30px; height: 28px; }
.pre b { position: absolute; left: 7px; top: 19px; width: 22px; height: 9px; border-radius: 2px; background: #ffc40c; color: #222; font: 800 8px/9px "Open Sans", sans-serif; letter-spacing: .4px; text-align: center; }
</style>
